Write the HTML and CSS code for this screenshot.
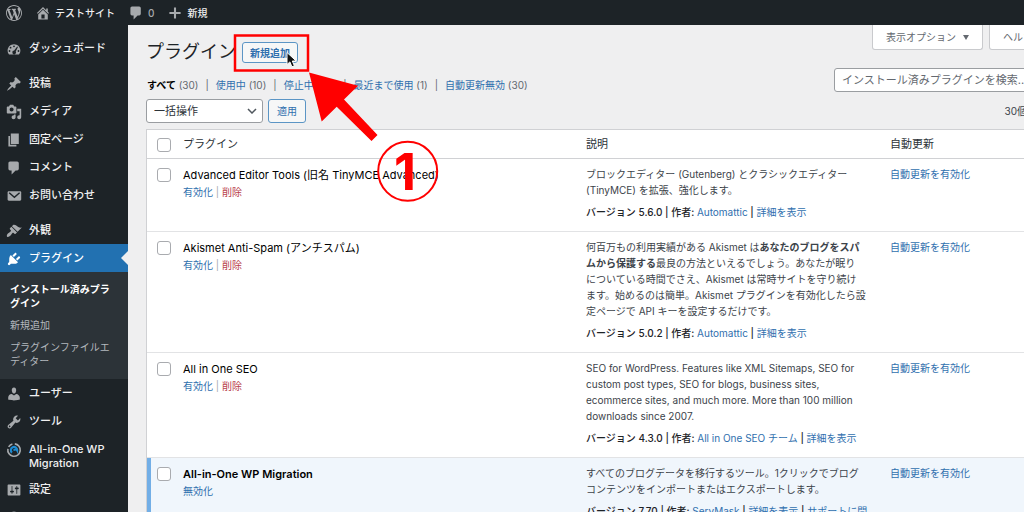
FILE: index.html
```html
<!DOCTYPE html>
<html lang="ja">
<head>
<meta charset="utf-8">
<title>プラグイン ‹ テストサイト</title>
<link rel="stylesheet" href="styles.css">
</head>
<body>
<header class="adminbar">
  <a href="#" class="bar-item" aria-label="WordPress"><svg class="icon" viewBox="0 0 20 20"><path d="M20 10c0-5.51-4.49-10-10-10C4.48 0 0 4.49 0 10c0 5.52 4.48 10 10 10 5.51 0 10-4.48 10-10zM7.78 15.37L4.37 6.22c.55-.02 1.17-.08 1.17-.08.5-.06.44-1.13-.06-1.11 0 0-1.45.11-2.37.11-.18 0-.37 0-.58-.01C4.12 2.69 6.87 1.11 10 1.11c2.33 0 4.45.87 6.05 2.34-.68-.11-1.65.39-1.65 1.58 0 .74.45 1.36.9 2.1.35.61.55 1.36.55 2.46 0 1.49-1.4 5-1.4 5l-3.03-8.37c.54-.02.82-.17.82-.17.5-.05.44-1.25-.06-1.22 0 0-1.44.12-2.38.12-.87 0-2.33-.12-2.33-.12-.5-.03-.56 1.2-.06 1.22l.92.08 1.26 3.41zM17.41 10c.24-.64.74-1.87.43-4.25.7 1.29 1.05 2.71 1.05 4.25 0 3.29-1.73 6.24-4.4 7.78.97-2.59 1.94-5.2 2.92-7.78zM6.1 18.09C3.12 16.65 1.11 13.53 1.11 10c0-1.3.23-2.48.72-3.59C3.25 10.3 4.67 14.2 6.1 18.09zm4.03-6.63l2.58 6.98c-.86.29-1.76.45-2.71.45-.79 0-1.57-.11-2.29-.33.81-2.38 1.62-4.74 2.42-7.1z"/></svg></a>
  <a href="#" class="bar-item"><svg class="icon" viewBox="0 0 20 20"><path d="M16 8.5l1.53 1.53-1.06 1.06L10 4.6l-6.47 6.49-1.06-1.06L10 2.5l4 4v-2h2v4zm-6-2.46l6 5.99V18H4v-5.97zM12 17v-5H8v5h4z"/></svg>テストサイト</a>
  <a href="#" class="bar-item bar-count"><svg class="icon" viewBox="0 0 20 20"><path d="M5 2h9c1.1 0 2 .9 2 2v7c0 1.1-.9 2-2 2h-2l-5 5v-5H5c-1.1 0-2-.9-2-2V4c0-1.1.9-2 2-2z"/></svg>0</a>
  <a href="#" class="bar-item"><svg class="icon" viewBox="0 0 20 20"><path d="M17 8.7v2.6h-5.7V17H8.700v-5.700H3V8.700h5.700V3h2.600v5.700z"/></svg>新規</a>
</header>
<div class="layout">
  <nav class="menu" aria-label="メインメニュー">
    <a href="#" class="menu-item"><svg class="icon" viewBox="0 0 20 20"><path fill-rule="evenodd" d="M3.760 17h12.480c1.090-1.400 1.760-3.100 1.760-5 0-4.420-3.580-8-8-8s-8 3.580-8 8c0 1.900.670 3.600 1.760 5zM10 5.600a1.100 1.100 0 1 1 0 2.200 1.100 1.100 0 0 1 0-2.200zM5.700 7.300a1.100 1.100 0 1 1 0 2.200 1.100 1.100 0 0 1 0-2.200zM4.400 11.400a1.100 1.100 0 1 1 0 2.200 1.100 1.100 0 0 1 0-2.200zM15.600 11.400a1.100 1.100 0 1 1 0 2.200 1.100 1.100 0 0 1 0-2.200zM14.900 7.400l-2.700 5.700a2.300 2.300 0 1 1-2-1.100l3.800-5z"/></svg>ダッシュボード</a>
    <hr class="menu-gap">
    <a href="#" class="menu-item"><svg class="icon" viewBox="0 0 20 20"><path d="M10.440 3.020l1.820-1.820 6.360 6.350-1.830 1.820c-1.050-.68-2.480-.57-3.410.36l-.75.75c-.92.93-1.040 2.350-.35 3.410l-1.830 1.820-2.410-2.410-2.800 2.790c-.42.42-3.380 2.710-3.800 2.290s1.860-3.390 2.280-3.810l2.790-2.790L4.100 9.360l1.830-1.820c1.050.69 2.480.57 3.400-.36l.75-.75c.93-.92 1.050-2.350.36-3.410z"/></svg>投稿</a>
    <a href="#" class="menu-item"><svg class="icon" viewBox="0 0 20 20"><path d="M13 11V4c0-.55-.45-1-1-1h-1.670L9 1H5L3.670 3H2c-.55 0-1 .45-1 1v7c0 .55.45 1 1 1h10c.55 0 1-.45 1-1zM7 4.500c1.380 0 2.500 1.120 2.500 2.500S8.380 9.500 7 9.500 4.500 8.380 4.500 7 5.620 4.500 7 4.500zM14 6h5v10.500c0 1.380-1.120 2.500-2.500 2.500S14 17.880 14 16.500s1.120-2.500 2.500-2.500c.17 0 .34.02.5.05V9h-3V6zm-4 8.050V13h2v3.500c0 1.380-1.120 2.500-2.500 2.500S7 17.880 7 16.500 8.120 14 9.500 14c.17 0 .34.02.5.05z"/></svg>メディア</a>
    <a href="#" class="menu-item"><svg class="icon" viewBox="0 0 20 20"><path d="M6 15V2h10v13H6zm-1 1h8v2H3V5h2v11z"/></svg>固定ページ</a>
    <a href="#" class="menu-item"><svg class="icon" viewBox="0 0 20 20"><path d="M5 2h9c1.1 0 2 .9 2 2v7c0 1.1-.9 2-2 2h-2l-5 5v-5H5c-1.1 0-2-.9-2-2V4c0-1.1.9-2 2-2z"/></svg>コメント</a>
    <a href="#" class="menu-item"><svg class="icon" viewBox="0 0 20 20"><path d="M3.500 4h14c.83 0 1.500.67 1.500 1.500v9c0 .83-.67 1.500-1.500 1.500h-14C2.670 16 2 15.330 2 14.500v-9C2 4.670 2.670 4 3.500 4z"/><path class="icon-cut" d="M4 6l6.500 5.500L17 6"/></svg>お問い合わせ</a>
    <hr class="menu-gap">
    <a href="#" class="menu-item"><svg class="icon" viewBox="0 0 20 20"><path d="M14.480 11.060L7.410 3.990l1.500-1.500c.5-.56 2.300-.47 3.510.32 1.210.8 1.430 1.280 2.910 2.100 1.180.64 2.450 1.260 4.450.85zm-.71.71L6.700 4.700 4.930 6.470c-.39.39-.39 1.020 0 1.410l1.060 1.060c.39.39.39 1.030 0 1.420-.6.6-1.430 1.110-2.210 1.690-.35.26-.7.53-1.010.84C1.430 14.230.4 16.080 1.400 17.070c.99 1 2.840-.03 4.180-1.360.31-.31.58-.66.85-1.020.57-.78 1.080-1.610 1.690-2.210.39-.39 1.020-.39 1.410 0l1.060 1.060c.39.39 1.020.39 1.410 0z"/></svg>外観</a>
    <a href="#" class="menu-item menu-current" aria-current="page"><svg class="icon" viewBox="0 0 20 20"><path d="M13.110 4.360L9.870 7.600 8 5.730l3.240-3.240c.35-.34 1.050-.2 1.560.32.52.51.66 1.210.31 1.550zm-8 1.770l.91-1.120 9.010 9.010-1.190.84c-.71.71-2.630 1.160-3.820 1.160H6.140L4.900 17.260c-.59.59-1.540.59-2.120 0-.59-.58-.59-1.530 0-2.120l1.240-1.240v-3.880c0-1.130.4-3.190 1.090-3.890zm7.260 3.970l3.240-3.240c.34-.35 1.040-.21 1.550.31.52.51.66 1.210.31 1.550l-3.240 3.250z"/></svg>プラグイン</a>
    <div class="submenu">
      <a href="#" class="submenu-current">インストール済みプラグイン</a>
      <a href="#">新規追加</a>
      <a href="#">プラグインファイルエディター</a>
    </div>
    <a href="#" class="menu-item"><svg class="icon" viewBox="0 0 20 20"><path d="M10 9.250c-2.270 0-2.730-3.440-2.730-3.440C7 4.020 7.820 2 9.970 2c2.160 0 2.980 2.020 2.710 3.810 0 0-.41 3.440-2.680 3.440zm0 2.570L12.720 10c2.390 0 4.520 2.330 4.520 4.530v2.490s-3.650 1.130-7.240 1.130c-3.650 0-7.240-1.130-7.240-1.130v-2.490c0-2.250 1.940-4.480 4.470-4.480z"/></svg>ユーザー</a>
    <a href="#" class="menu-item"><svg class="icon" viewBox="0 0 20 20"><path d="M16.680 9.770c-1.340 1.340-3.300 1.670-4.950.99l-5.410 6.520c-.99.99-2.590.99-3.580 0s-.99-2.590 0-3.570l6.520-5.420c-.68-1.650-.35-3.610.99-4.950 1.280-1.280 3.120-1.620 4.720-1.060l-2.890 2.890 2.820 2.820 2.860-2.870c.53 1.580.18 3.390-1.080 4.650zM3.810 16.210c.4.39 1.040.39 1.430 0 .4-.4.4-1.040 0-1.430-.39-.4-1.030-.4-1.430 0-.39.39-.39 1.030 0 1.430z"/></svg>ツール</a>
    <a href="#" class="menu-item"><svg class="icon icon-lines" viewBox="0 0 20 20"><path d="M11 2.300A7.800 7.800 0 1 1 2.400 8.500"/><path d="M3.300 6A7.800 7.800 0 0 1 8 2.400"/><path class="icon-blue" d="M7.500 13.300A4 4 0 1 1 14 10.500a2.300 2.300 0 0 0-4.200.300"/></svg><span>All-in-One WP Migration</span></a>
    <a href="#" class="menu-item"><svg class="icon" viewBox="0 0 20 20"><path d="M18 16V4c0-.55-.45-1-1-1H3c-.55 0-1 .45-1 1v12c0 .55.45 1 1 1h14c.55 0 1-.45 1-1zM8 11h1c.55 0 1 .45 1 1s-.45 1-1 1H8v1.500c0 .28-.22.5-.5.5s-.5-.22-.5-.5V13H6c-.55 0-1-.45-1-1s.45-1 1-1h1V5.500c0-.28.22-.5.5-.5s.5.22.5.5V11zm5-2h-1c-.55 0-1-.45-1-1s.45-1 1-1h1V5.500c0-.28.22-.5.5-.5s.5.22.5.5V7h1c.55 0 1 .45 1 1s-.45 1-1 1h-1v5.500c0 .28-.22.5-.5.5s-.5-.22-.5-.5V9z"/></svg>設定</a>
    <a href="#" class="menu-item" aria-label="メニューを閉じる"><svg class="icon" viewBox="0 0 20 20"><circle cx="10" cy="10" r="8"/></svg></a>
  </nav>
  <main class="content">
    <div class="heading">
      <h1>プラグイン</h1>
      <button type="button" class="btn btn-add">新規追加</button>
      <div class="screen-links">
        <button type="button">表示オプション<span class="caret"></span></button>
        <button type="button">ヘルプ<span class="caret"></span></button>
      </div>
    </div>
    <div class="views-row">
      <ul class="views">
        <li><a href="#" class="view-current">すべて</a> (30)</li>
        <li><a href="#">使用中</a> (10)</li>
        <li><a href="#">停止中</a> (20)</li>
        <li><a href="#">最近まで使用</a> (1)</li>
        <li><a href="#">自動更新無効</a> (30)</li>
      </ul>
      <input type="search" class="search" aria-label="インストール済みプラグインを検索" placeholder="インストール済みプラグインを検索...">
    </div>
    <div class="actions-row">
      <div class="select-wrap">
        <select aria-label="一括操作を選択"><option>一括操作</option></select>
        <svg viewBox="0 0 10 6"><path d="M1 1l4 4 4-4"/></svg>
      </div>
      <button type="button" class="btn">適用</button>
      <span class="total">30個の項目</span>
    </div>
    <table class="plugins">
      <colgroup><col class="col-check"><col class="col-name"><col class="col-desc"><col></colgroup>
      <thead>
        <tr><th><input type="checkbox" aria-label="すべて選択"></th><th>プラグイン</th><th>説明</th><th>自動更新</th></tr>
      </thead>
      <tbody>
        <tr>
          <td><input type="checkbox" aria-label="Advanced Editor Tools を選択"></td>
          <td><div class="name">Advanced Editor Tools (旧名 TinyMCE Advanced)</div><div class="row-actions"><a href="#">有効化</a> | <a href="#" class="delete">削除</a></div></td>
          <td><p>ブロックエディター (Gutenberg) とクラシックエディター<br>(TinyMCE) を拡張、強化します。</p><p class="meta">バージョン 5.6.0 | 作者: <a href="#">Automattic</a> | <a href="#">詳細を表示</a></p></td>
          <td><a href="#">自動更新を有効化</a></td>
        </tr>
        <tr>
          <td><input type="checkbox" aria-label="Akismet Anti-Spam を選択"></td>
          <td><div class="name">Akismet Anti-Spam (アンチスパム)</div><div class="row-actions"><a href="#">有効化</a> | <a href="#" class="delete">削除</a></div></td>
          <td><p>何百万もの利用実績がある Akismet は<b>あなたのブログをスパ<br>ムから保護する</b>最良の方法といえるでしょう。あなたが眠り<br>についている時間でさえ、Akismet は常時サイトを守り続け<br>ます。始めるのは簡単。Akismet プラグインを有効化したら設<br>定ページで API キーを設定するだけです。</p><p class="meta">バージョン 5.0.2 | 作者: <a href="#">Automattic</a> | <a href="#">詳細を表示</a></p></td>
          <td><a href="#">自動更新を有効化</a></td>
        </tr>
        <tr>
          <td><input type="checkbox" aria-label="All in One SEO を選択"></td>
          <td><div class="name">All in One SEO</div><div class="row-actions"><a href="#">有効化</a> | <a href="#" class="delete">削除</a></div></td>
          <td><p>SEO for WordPress. Features like XML Sitemaps, SEO for<br>custom post types, SEO for blogs, business sites,<br>ecommerce sites, and much more. More than 100 million<br>downloads since 2007.</p><p class="meta">バージョン 4.3.0 | 作者: <a href="#">All in One SEO チーム</a> | <a href="#">詳細を表示</a></p></td>
          <td><a href="#">自動更新を有効化</a></td>
        </tr>
        <tr class="active">
          <td><input type="checkbox" aria-label="All-in-One WP Migration を選択"></td>
          <td><div class="name">All-in-One WP Migration</div><div class="row-actions"><a href="#">無効化</a></div></td>
          <td><p>すべてのブログデータを移行するツール。1クリックでブログ<br>コンテンツをインポートまたはエクスポートします。</p><p class="meta">バージョン 7.70 | 作者: <a href="#">ServMask</a> | <a href="#">詳細を表示</a> | <a href="#">サポートに問<br>い合わせ</a></p></td>
          <td><a href="#">自動更新を有効化</a></td>
        </tr>
      </tbody>
    </table>
  </main>
</div>
<svg class="marks" viewBox="0 0 220 180" aria-hidden="true">
  <rect class="mark-line" x="5" y="5.500" width="73" height="35"/>
  <path class="mark-fill" d="M79 42.500l49 13.200-14 13.800 33.500 35.500-6 6-34.800-34.300L91.700 91.500z"/>
  <circle class="mark-line mark-ring" cx="177.700" cy="141.300" r="29.500"/>
  <text class="mark-number" x="175" y="160">1</text>
  <path class="pointer" d="M57 22.500v12l2.900-2.600 2 4.900 2.500-1-2.100-4.800h3.900z"/>
</svg>
</body>
</html>
```

FILE: styles.css
```css
* { box-sizing: border-box; }
html { overflow: hidden; }
body {
  margin: 0;
  min-width: 1080px;
  position: relative;
  background: #efeff0;
  color: #3c434a;
  font: 10px/16px Inter, "Noto Sans CJK JP", sans-serif;
}
a { color: #2f6fae; text-decoration: none; }
p, h1, ul { margin: 0; padding: 0; }
button, input, select { font: inherit; margin: 0; }

.icon { width: 16px; height: 16px; flex: none; fill: #a7aaad; }
.icon-cut { fill: none; stroke: #1d2327; stroke-width: 1.8; }
.icon-lines { fill: none; stroke: #a7aaad; stroke-width: 2; }
.icon-blue { stroke: #1e8cd2; stroke-width: 2.6; }

.adminbar {
  display: flex;
  align-items: center;
  gap: 13px;
  height: 25px;
  padding: 1px 6px 0;
  background: #1d2327;
}
.bar-item { display: flex; align-items: center; gap: 4px; color: #f0f0f1; font-weight: 500; }
.bar-count { color: #a7aaad; }

.layout { display: flex; align-items: stretch; }
.menu {
  flex: none;
  width: 128px;
  padding-top: 9px;
  background: #1d2327;
  font-size: 11px;
  line-height: 14px;
  font-weight: 500;
}
.menu-gap { height: 7px; margin: 0; border: 0; }
.menu-item {
  display: flex;
  gap: 7px;
  min-height: 28px;
  padding: 7px 6px 5px;
  color: #f0f0f1;
}
.menu-item .icon { margin-bottom: -2px; }
.menu-current { position: relative; background: #2271b1; color: #fff; }
.menu-current .icon { fill: #fff; }
.menu-current::after {
  content: "";
  position: absolute;
  right: 0;
  top: 7px;
  border: 7px solid transparent;
  border-left: 0;
  border-right-color: #efeff0;
}
.submenu { padding: 6px 12px 7px 0; background: #2c3338; font-size: 10px; }
.submenu a { display: block; padding: 4px 0 4px 10px; color: #b4b9be; font-weight: 400; }
.submenu .submenu-current { color: #fff; font-weight: 700; }

.content { flex: 1; min-width: 0; padding: 0 16px 0 18px; }
.heading { display: flex; align-items: flex-start; height: 43px; }
.heading h1 { padding-top: 15px; color: #1d2327; font-size: 18px; line-height: 24px; font-weight: 400; }
.btn {
  height: 24px;
  padding: 0 8px;
  border: 1px solid #5b95c5;
  border-radius: 3px;
  background: #f6f7f7;
  color: #2f6fae;
}
.btn-add { height: 21px; margin: 17px 0 0 6px; padding: 0 7px; line-height: 16px; font-weight: 600; }
.screen-links { display: flex; gap: 6px; margin: 0 4px 0 auto; }
.screen-links button {
  display: flex;
  align-items: center;
  gap: 7px;
  height: 25px;
  padding: 0 13px;
  border: 1px solid #c9cacd;
  border-top: 0;
  border-radius: 0 0 3px 3px;
  background: #fff;
  color: #646970;
}
.caret { border: 3px solid transparent; border-top: 5px solid #646970; border-bottom: 0; }

.views-row { display: flex; align-items: flex-end; justify-content: space-between; height: 24px; }
.views { display: flex; padding-left: 1px; list-style: none; color: #646970; line-height: 14px; white-space: nowrap; }
.views li + li::before { content: "|"; margin: 0 7px; }
.views .view-current { color: #000; font-weight: 700; }
.search {
  width: 230px;
  height: 24px;
  padding: 0 7px;
  border: 1px solid #9a9da1;
  border-radius: 3px;
  background: #fff;
  font-size: 11px;
}
.search::placeholder { color: #646970; }

.actions-row { display: flex; align-items: center; gap: 5px; padding: 7px 0 6px; }
.select-wrap { position: relative; width: 117px; }
.select-wrap select {
  width: 100%;
  height: 24px;
  padding: 0 7px;
  border: 1px solid #9a9da1;
  border-radius: 3px;
  appearance: none;
  background: #fff;
  color: #2c3338;
  font-size: 11px;
}
.select-wrap svg {
  position: absolute;
  right: 6px;
  top: 9px;
  width: 10px;
  height: 6px;
  fill: none;
  stroke: #50575e;
  stroke-width: 1.5;
}
.total { margin: 0 7px 0 auto; }

.plugins {
  width: 100%;
  table-layout: fixed;
  border-collapse: separate;
  border-spacing: 0;
  border: 1px solid #d0d1d4;
  background: #fff;
}
.col-check { width: 28px; }
.col-name { width: 44%; }
.col-desc { width: 304px; }
.plugins th {
  height: 29px;
  padding: 0 8px;
  border-bottom: 1px solid #d0d1d4;
  color: #2c3338;
  font-size: 11px;
  font-weight: 400;
  text-align: left;
}
.plugins td { padding: 7px 8px 11px; border-bottom: 1px solid #e2e3e5; vertical-align: top; white-space: nowrap; }
.plugins th:first-child, .plugins td:first-child { padding-left: 10px; padding-right: 0; }
.plugins input {
  display: block;
  width: 14px;
  height: 14px;
  margin-top: 2px;
  border: 1px solid #a9abaf;
  border-radius: 3px;
  appearance: none;
  background: #fff;
}
.name { color: #000; font-size: 11px; line-height: 18px; }
.row-actions { color: #a7aaad; }
.delete { color: #b8404a; }
.meta { padding-top: 6px; color: #1d2327; font-weight: 500; }
.meta a { font-weight: 400; }
.active td { background: #f0f6fc; }
.plugins .active td:first-child { padding-left: 6px; border-left: 4px solid #72aee6; }
.active .name { font-weight: 600; }

.marks { position: absolute; left: 230px; top: 30px; width: 220px; height: 180px; pointer-events: none; }
.mark-line { fill: none; stroke: #f00; stroke-width: 2.5; }
.mark-ring { stroke-width: 2; }
.mark-fill { fill: #f00; }
.mark-number { fill: #f00; font: 700 51px Inter, sans-serif; text-anchor: middle; }
.pointer { fill: #111; stroke: #fff; stroke-width: 1; }
```
